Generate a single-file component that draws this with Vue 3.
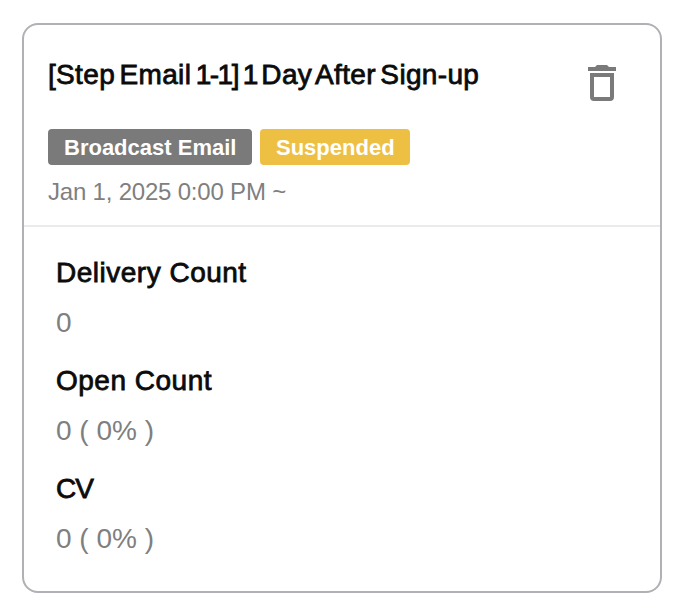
<script setup>
const tags = [
  { label: 'Broadcast Email', type: 'broadcast' },
  { label: 'Suspended', type: 'suspended' }
]

const stats = [
  { label: 'Delivery Count', value: '0', key: 'delivery' },
  { label: 'Open Count', value: '0 ( 0% )', key: 'open' },
  { label: 'CV', value: '0 ( 0% )', key: 'cv' }
]
</script>

<template>
  <article class="card">
    <header class="card-header">
      <div class="title-row">
        <h2 class="title">[Step Email <span class="number">1-1] 1</span> Day After Sign-up</h2>
        <button class="delete" type="button" aria-label="Delete">
          <svg width="28" height="36" viewBox="0 0 28 36" fill="currentColor">
            <path d="M0 2h7l2-2h10l2 2h7v4H0z" />
            <path fill-rule="evenodd" d="M2 8h24v24a4 4 0 0 1-4 4H6a4 4 0 0 1-4-4zM6 12v20h16V12z" />
          </svg>
        </button>
      </div>
      <div class="tags">
        <span v-for="tag in tags" :key="tag.type" class="tag" :class="tag.type">{{ tag.label }}</span>
      </div>
      <p class="date">Jan 1, 2025 0:00 PM ~</p>
    </header>

    <dl class="stats">
      <div v-for="stat in stats" :key="stat.key" class="stat" :class="stat.key">
        <dt>{{ stat.label }}</dt>
        <dd>{{ stat.value }}</dd>
      </div>
    </dl>
  </article>
</template>

<style>
body {
  background: #fff;
}
</style>

<style scoped>
.card {
  box-sizing: border-box;
  width: 640px;
  height: 570px;
  margin: 23px 0 0 22px;
  border: 2px solid #b1b1b5;
  border-radius: 16px;
  font-family: "Liberation Sans", Arial, sans-serif;
  white-space: nowrap;
}

.card-header {
  box-sizing: border-box;
  height: 202px;
  padding: 32px 44px 0 24px;
  border-bottom: 2px solid #ebebeb;
}

.title-row {
  display: flex;
  justify-content: space-between;
  height: 72px;
}

.title {
  margin: 0;
  color: #0b0b0b;
  font-size: 28px;
  font-weight: 400;
  line-height: 36px;
  letter-spacing: 0.33px;
  word-spacing: -3.6px;
  -webkit-text-stroke: 0.8px currentColor;
}

.number {
  letter-spacing: -1.5px;
  word-spacing: -1.5px;
}

.delete {
  align-self: flex-start;
  margin: 8px 0 0;
  padding: 0;
  border: none;
  background: none;
  color: #7a7a7a;
  cursor: pointer;
}

.delete svg {
  display: block;
}

.tags {
  display: flex;
  gap: 8px;
}

.tag {
  box-sizing: border-box;
  width: 204px;
  height: 36px;
  padding-left: 16px;
  border-radius: 4px;
  background: #7a7a7a;
  color: #fff;
  font-size: 22px;
  font-weight: 700;
  line-height: 37px;
}

.suspended {
  width: 150px;
  background: #edc044;
}

.date {
  margin: 9px 0 0;
  color: #7f7f7f;
  font-size: 24px;
  line-height: 36px;
  letter-spacing: -0.2px;
}

.stats {
  margin: 0;
  padding: 24px 32px 0;
}

.stat {
  height: 108px;
}

dt {
  color: #0b0b0b;
  font-size: 28px;
  line-height: 44px;
  letter-spacing: 0.5px;
  -webkit-text-stroke: 0.8px currentColor;
}

.cv dt {
  letter-spacing: -1px;
}

dd {
  margin: 6px 0 0;
  color: #7f7f7f;
  font-size: 28px;
  line-height: 44px;
}
</style>
